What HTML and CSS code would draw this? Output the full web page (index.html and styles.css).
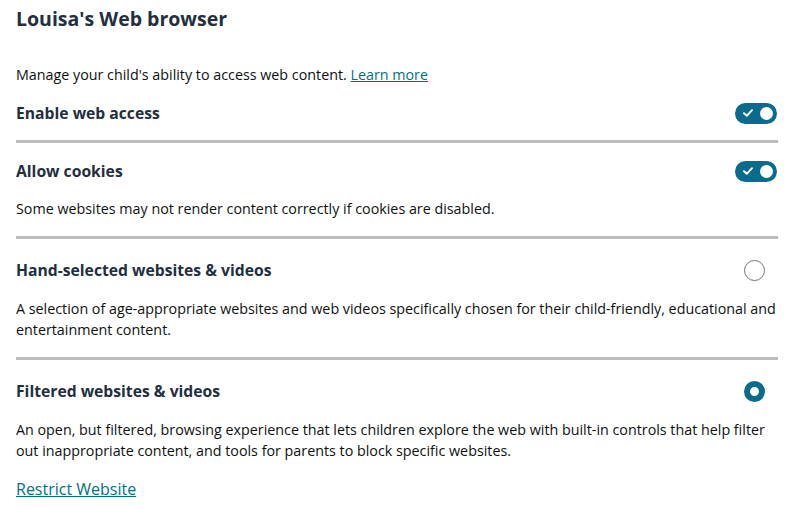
FILE: index.html
```html
<!DOCTYPE html>
<html lang="en">
<head>
<meta charset="utf-8">
<title>Louisa's Web browser</title>
<link rel="stylesheet" href="styles.css">
</head>
<body>
<main class="page">
  <h1 class="title">Louisa's Web browser</h1>
  <p class="intro">Manage your child's ability to access web content. <a href="#" class="link">Learn more</a></p>

  <section class="setting first">
    <div class="row">
      <h2 class="label">Enable web access</h2>
      <span class="toggle on" role="switch" aria-checked="true">
        <svg class="check" width="10" height="8" viewBox="0 0 10 8"><path d="M1 4.2 L3.8 6.8 L9 1.2" fill="none" stroke="#fff" stroke-width="1.9" stroke-linecap="round" stroke-linejoin="round"/></svg>
        <span class="knob"></span>
      </span>
    </div>
  </section>

  <section class="setting">
    <div class="row">
      <h2 class="label">Allow cookies</h2>
      <span class="toggle on" role="switch" aria-checked="true">
        <svg class="check" width="10" height="8" viewBox="0 0 10 8"><path d="M1 4.2 L3.8 6.8 L9 1.2" fill="none" stroke="#fff" stroke-width="1.9" stroke-linecap="round" stroke-linejoin="round"/></svg>
        <span class="knob"></span>
      </span>
    </div>
    <p class="desc">Some websites may not render content correctly if cookies are disabled.</p>
  </section>

  <section class="setting option">
    <div class="row">
      <h2 class="label">Hand-selected websites &amp; videos</h2>
      <span class="radio" role="radio" aria-checked="false"></span>
    </div>
    <p class="desc">A selection of age-appropriate websites and web videos specifically chosen for their child-friendly, educational and entertainment content.</p>
  </section>

  <section class="setting option">
    <div class="row">
      <h2 class="label">Filtered websites &amp; videos</h2>
      <span class="radio checked" role="radio" aria-checked="true"></span>
    </div>
    <p class="desc">An open, but filtered, browsing experience that lets children explore the web with built-in controls that help filter out inappropriate content, and tools for parents to block specific websites.</p>
    <a href="#" class="link action">Restrict Website</a>
  </section>
</main>
</body>
</html>
```
FILE: styles.css
```css
* { box-sizing: border-box; }
html, body { margin: 0; padding: 0; background: #fff; }
body {
  font-family: "Open Sans", "Noto Sans", Arial, sans-serif;
  color: #0f1111;
}
.page {
  width: 762px;
  margin-left: 16px;
  padding-top: 5px;
}
.title {
  margin: 0;
  font-size: 19.5px;
  line-height: 28px;
  font-weight: 700;
  color: #232f3e;
}
.intro {
  margin: 32px 0 0;
  font-size: 14.3px;
  line-height: 20px;
}
.link {
  color: #007185;
  text-decoration: underline;
}
.setting {
  border-top: 3px solid #bbbdbd;
  padding: 17px 0 17px;
}
.setting.first {
  border-top: none;
  padding-top: 17px;
  padding-bottom: 16px;
}
.setting.option {
  padding-top: 20px;
}
.row {
  display: flex;
  align-items: center;
  justify-content: space-between;
  min-height: 22px;
}
.label {
  margin: 0;
  font-size: 15.7px;
  line-height: 22px;
  font-weight: 700;
  color: #232f3e;
}
.desc {
  margin: 16px 0 0;
  font-size: 14.3px;
  line-height: 21px;
}
.option .desc {
  margin-top: 17px;
}
.toggle {
  width: 42px;
  height: 21px;
  border-radius: 11px;
  background: #0b6b8c;
  display: flex;
  align-items: center;
  justify-content: space-between;
  padding: 0 4px 0 8px;
  margin-right: 1px;
}
.knob {
  width: 13px;
  height: 13px;
  border-radius: 50%;
  background: #fff;
}
.check { display: block; }
.radio {
  width: 21px;
  height: 21px;
  border-radius: 50%;
  border: 1px solid #6f7373;
  margin-right: 13px;
}
.radio.checked {
  border: 6.5px solid #0b6b8c;
  background: #fff;
}
.action {
  display: inline-block;
  margin-top: 17px;
  font-size: 16px;
  line-height: 22px;
}
```
